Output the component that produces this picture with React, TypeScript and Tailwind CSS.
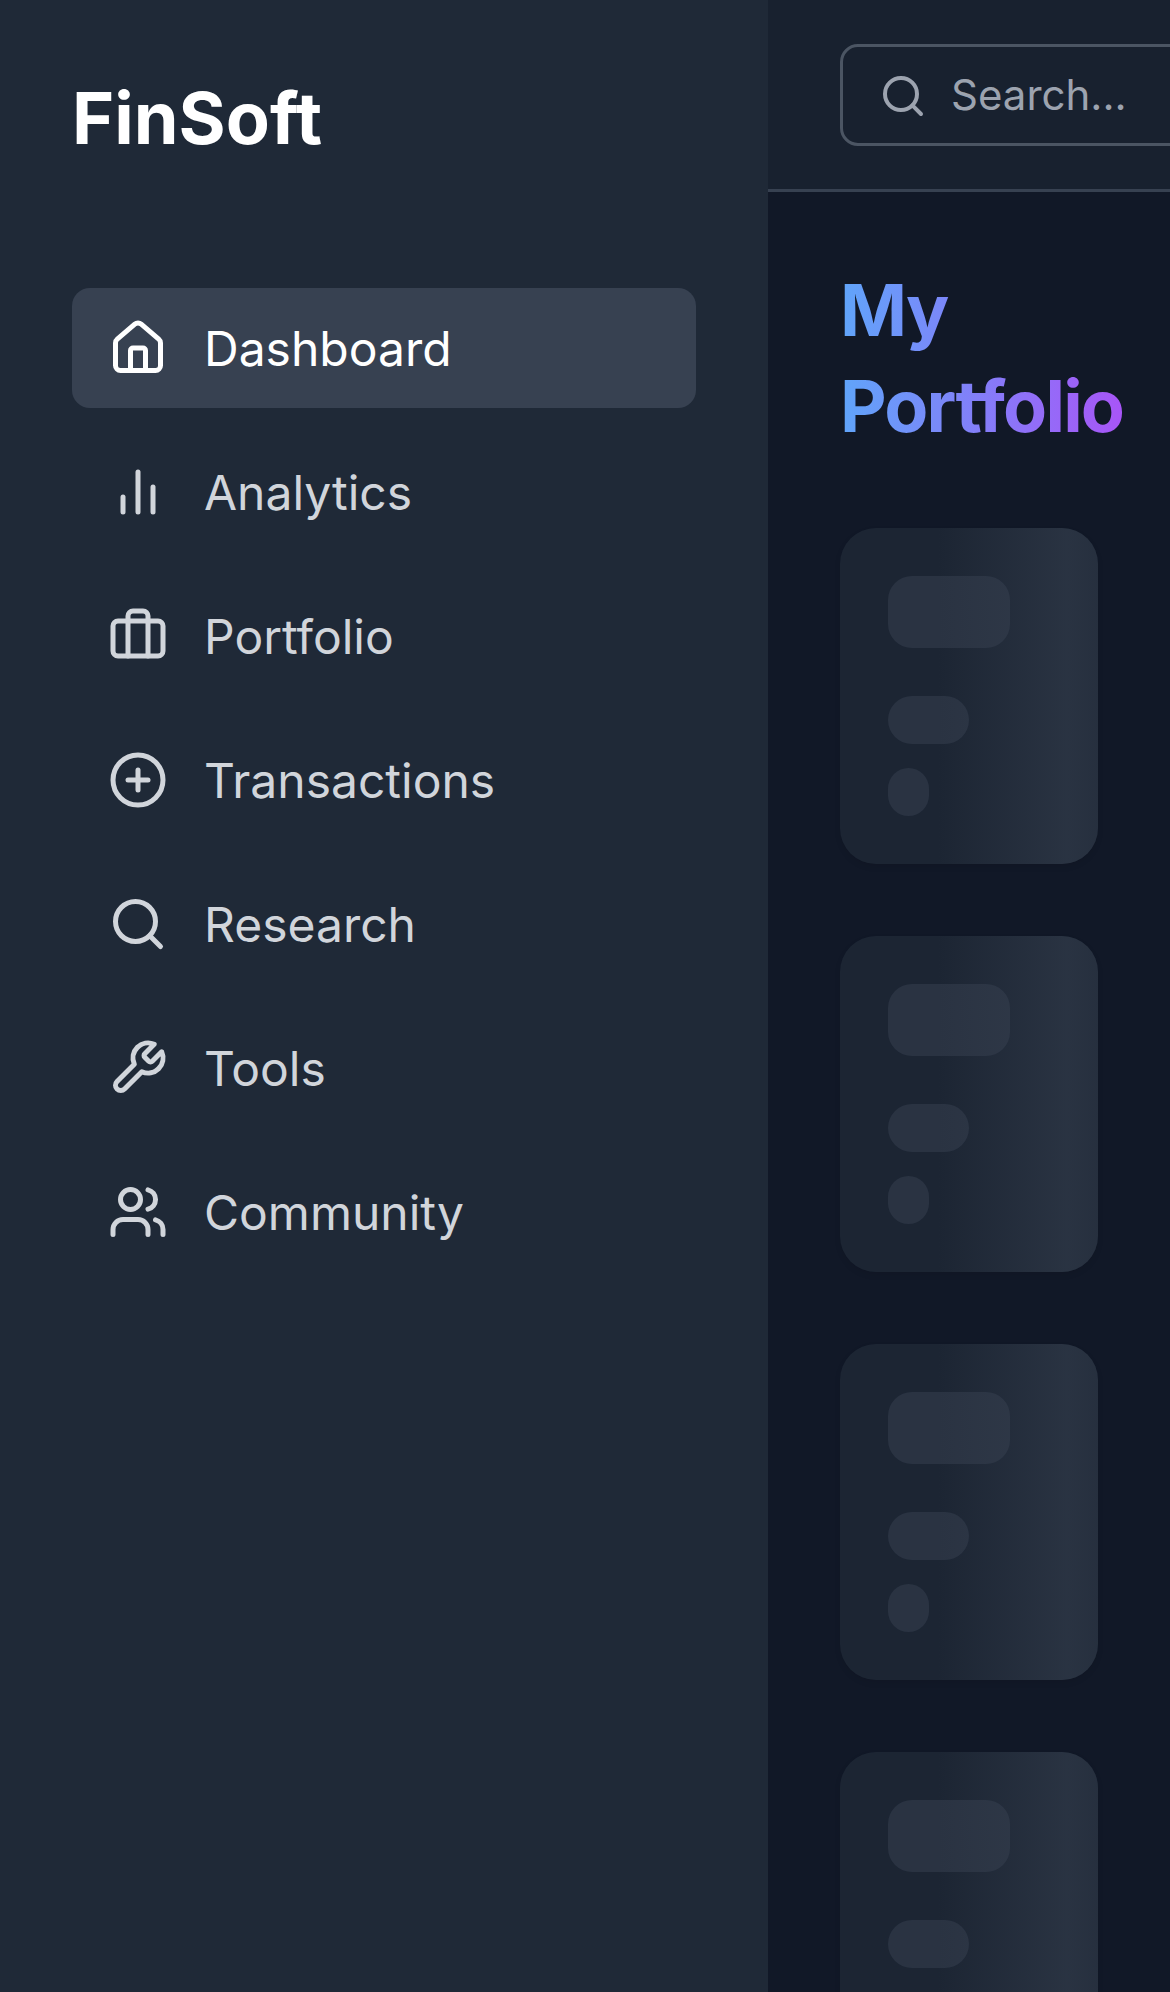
import type { ReactNode } from "react";

function Icon({ className, children }: { className: string; children: ReactNode }) {
  return (
    <svg
      viewBox="0 0 24 24"
      fill="none"
      stroke="currentColor"
      strokeWidth="2"
      strokeLinecap="round"
      strokeLinejoin="round"
      className={className}
    >
      {children}
    </svg>
  );
}

const searchPaths = (
  <>
    <circle cx="11" cy="11" r="8" />
    <path d="m21 21-4.3-4.3" />
  </>
);

const navItems: { label: string; icon: ReactNode }[] = [
  {
    label: "Dashboard",
    icon: (
      <>
        <path d="M15 21v-8a1 1 0 0 0-1-1h-4a1 1 0 0 0-1 1v8" />
        <path d="M3 10a2 2 0 0 1 .709-1.528l7-5.999a2 2 0 0 1 2.582 0l7 5.999A2 2 0 0 1 21 10v9a2 2 0 0 1-2 2H5a2 2 0 0 1-2-2z" />
      </>
    ),
  },
  {
    label: "Analytics",
    icon: (
      <>
        <path d="M18 20V10" />
        <path d="M12 20V4" />
        <path d="M6 20v-6" />
      </>
    ),
  },
  {
    label: "Portfolio",
    icon: (
      <>
        <path d="M16 20V4a2 2 0 0 0-2-2h-4a2 2 0 0 0-2 2v16" />
        <rect width="20" height="14" x="2" y="6" rx="2" />
      </>
    ),
  },
  {
    label: "Transactions",
    icon: (
      <>
        <circle cx="12" cy="12" r="10" />
        <path d="M8 12h8" />
        <path d="M12 8v8" />
      </>
    ),
  },
  { label: "Research", icon: searchPaths },
  {
    label: "Tools",
    icon: (
      <path d="M14.7 6.3a1 1 0 0 0 0 1.4l1.6 1.6a1 1 0 0 0 1.4 0l3.77-3.77a6 6 0 0 1-7.94 7.94l-6.91 6.91a2.12 2.12 0 0 1-3-3l6.91-6.91a6 6 0 0 1 7.94-7.94l-3.76 3.76z" />
    ),
  },
  {
    label: "Community",
    icon: (
      <>
        <path d="M16 21v-2a4 4 0 0 0-4-4H6a4 4 0 0 0-4 4v2" />
        <circle cx="9" cy="7" r="4" />
        <path d="M22 21v-2a4 4 0 0 0-3-3.87" />
        <path d="M16 3.13a4 4 0 0 1 0 7.75" />
      </>
    ),
  },
];

function Sidebar() {
  return (
    <aside className="w-[768px] shrink-0 bg-[#1f2937] px-[72px] pt-[70px]">
      <h1 className="text-[72px] leading-[96px] font-bold text-white">FinSoft</h1>
      <nav className="mt-[122px] flex flex-col gap-6">
        {navItems.map(({ label, icon }, i) => (
          <a
            key={label}
            className={
              i === 0
                ? "flex h-[120px] items-center gap-9 rounded-[18px] bg-[#374151] px-9 text-white"
                : "flex h-[120px] items-center gap-9 rounded-[18px] px-9 text-[#d1d5db]"
            }
          >
            <Icon className="size-[60px]">{icon}</Icon>
            <span className="pt-0.5 text-[48px] leading-[72px]">{label}</span>
          </a>
        ))}
      </nav>
    </aside>
  );
}

function SkeletonCard() {
  return (
    <div className="relative h-[336px] w-[258px] shrink-0 overflow-hidden rounded-[36px] bg-[#1f2937]/80 p-12 shadow-[0_3px_6px_rgba(0,0,0,0.08)]">
      <div className="h-[72px] w-3/4 rounded-3xl bg-[#374151]/50" />
      <div className="mt-12 h-12 w-1/2 rounded-3xl bg-[#374151]/50" />
      <div className="mt-6 h-12 w-1/4 rounded-3xl bg-[#374151]/50" />
      <div className="absolute inset-0 translate-x-[98px] bg-[linear-gradient(90deg,transparent,rgba(55,65,81,0.5),transparent)]" />
    </div>
  );
}

export default function App() {
  return (
    <div className="flex h-[1992px] w-[1170px] overflow-hidden bg-[#111827] font-['Inter',sans-serif]">
      <Sidebar />
      <div className="flex min-w-0 flex-1 flex-col overflow-hidden">
        <header className="flex h-48 shrink-0 items-start border-b-[3px] border-[#374151] bg-[#1f2937]/50 pt-11 pl-[72px]">
          <div className="flex h-[102px] w-[768px] shrink-0 items-center gap-6 rounded-[18px] border-[3px] border-[#4b5563] pl-9 text-[#9ca3af]">
            <Icon className="mt-0.5 size-12">{searchPaths}</Icon>
            <span className="text-[42px] leading-[60px]">Search...</span>
          </div>
        </header>
        <main className="px-[72px] pt-[70px]">
          <h2 className="w-min bg-[linear-gradient(90deg,#60a5fa,#a855f7)] bg-clip-text text-[72px] leading-[96px] font-bold tracking-tight text-transparent">
            My Portfolio
          </h2>
          <div className="mt-[74px] flex flex-col gap-[72px]">
            {[0, 1, 2, 3].map((n) => (
              <SkeletonCard key={n} />
            ))}
          </div>
        </main>
      </div>
    </div>
  );
}
